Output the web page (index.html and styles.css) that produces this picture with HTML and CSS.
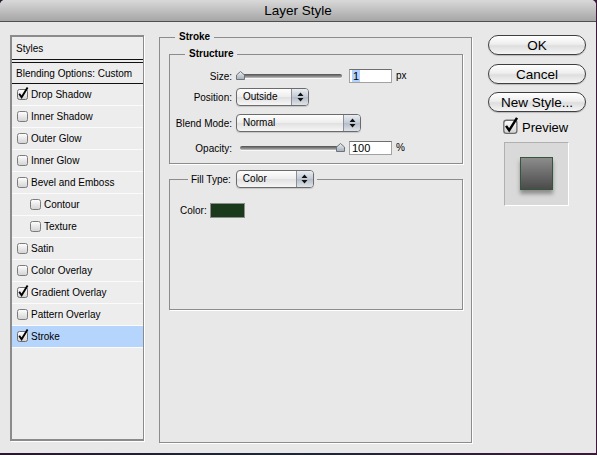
FILE: index.html
```html
<!DOCTYPE html>
<html lang="en">
<head>
  <meta charset="UTF-8" />
  <title>Layer Style</title>
  <link rel="stylesheet" href="styles.css">
</head>
<body>
  <!-- shared checkbox and arrow glyphs -->
  <svg class="defs" width="0" height="0">
    <defs>
      <linearGradient id="box-fill" x1="0" y1="0" x2="0" y2="1">
        <stop offset="0" stop-color="#ffffff"/>
        <stop offset="1" stop-color="#d2d2d2"/>
      </linearGradient>
      <linearGradient id="knob-fill" x1="0" y1="0" x2="0" y2="1">
        <stop offset="0" stop-color="#eef1f5"/>
        <stop offset="1" stop-color="#a4acb6"/>
      </linearGradient>
    </defs>
    <symbol id="cb-off" viewBox="0 0 12 13">
      <rect x="0.5" y="2.5" width="10" height="10" rx="2" fill="url(#box-fill)" stroke="#7c7c7c"/>
    </symbol>
    <symbol id="cb-on" viewBox="0 0 12 13">
      <rect x="0.5" y="2.5" width="10" height="10" rx="2" fill="url(#box-fill)" stroke="#6c6c6c"/>
      <path d="M2.2 6.8 L4.6 10.2 L10.6 0.6" fill="none" stroke="#000" stroke-width="1.9"/>
    </symbol>
    <symbol id="updown" viewBox="0 0 7 10">
      <path d="M3.5 0.5 L6.5 4 H0.5 Z M3.5 9.5 L6.5 6 H0.5 Z" fill="#111"/>
    </symbol>
    <symbol id="knob" viewBox="0 0 9 9">
      <path d="M0.5 8.5 V4 L4.5 0.5 L8.5 4 V8.5 Z" fill="url(#knob-fill)" stroke="#6e747c"/>
    </symbol>
  </svg>

  <div class="window">
    <div class="titlebar">Layer Style</div>

    <div class="content">
      <!-- effects list -->
      <ul class="styles-list">
        <li class="heading">Styles</li>
        <li class="blending">Blending Options: Custom</li>
        <li><svg class="cb"><use href="#cb-on"/></svg>Drop Shadow</li>
        <li><svg class="cb"><use href="#cb-off"/></svg>Inner Shadow</li>
        <li><svg class="cb"><use href="#cb-off"/></svg>Outer Glow</li>
        <li><svg class="cb"><use href="#cb-off"/></svg>Inner Glow</li>
        <li><svg class="cb"><use href="#cb-off"/></svg>Bevel and Emboss</li>
        <li class="sub"><svg class="cb"><use href="#cb-off"/></svg>Contour</li>
        <li class="sub"><svg class="cb"><use href="#cb-off"/></svg>Texture</li>
        <li><svg class="cb"><use href="#cb-off"/></svg>Satin</li>
        <li><svg class="cb"><use href="#cb-off"/></svg>Color Overlay</li>
        <li><svg class="cb"><use href="#cb-on"/></svg>Gradient Overlay</li>
        <li><svg class="cb"><use href="#cb-off"/></svg>Pattern Overlay</li>
        <li class="active"><svg class="cb"><use href="#cb-on"/></svg>Stroke</li>
      </ul>

      <!-- stroke settings -->
      <fieldset class="group stroke-group">
        <legend class="stroke-legend">Stroke</legend>

        <fieldset class="group structure">
          <legend class="structure-legend">Structure</legend>

          <div class="row row-size">
            <label class="label">Size:</label>
            <div class="slider">
              <div class="track"></div>
              <svg class="knob knob-start"><use href="#knob"/></svg>
            </div>
            <div class="field"><span class="selected">1</span></div>
            <span class="unit">px</span>
          </div>

          <div class="row row-position">
            <label class="label">Position:</label>
            <div class="select select-position">
              <span class="value">Outside</span>
              <span class="arrows"><svg><use href="#updown"/></svg></span>
            </div>
          </div>

          <div class="row row-blend">
            <label class="label">Blend Mode:</label>
            <div class="select select-blend">
              <span class="value">Normal</span>
              <span class="arrows"><svg><use href="#updown"/></svg></span>
            </div>
          </div>

          <div class="row row-opacity">
            <label class="label">Opacity:</label>
            <div class="slider">
              <div class="track"></div>
              <svg class="knob knob-end"><use href="#knob"/></svg>
            </div>
            <div class="field">100</div>
            <span class="unit">%</span>
          </div>
        </fieldset>

        <fieldset class="group fill">
          <legend class="fill-legend">
            <span class="fill-label">Fill Type:</span>
            <span class="select select-fill">
              <span class="value">Color</span>
              <span class="arrows"><svg><use href="#updown"/></svg></span>
            </span>
          </legend>

          <div class="color-row">
            <span>Color:</span>
            <span class="swatch"></span>
          </div>
        </fieldset>
      </fieldset>

      <!-- dialog buttons and preview -->
      <div class="side">
        <button class="btn btn-ok">OK</button>
        <button class="btn btn-cancel">Cancel</button>
        <button class="btn btn-new">New Style...</button>
        <div class="preview-toggle">
          <svg class="cb-big"><use href="#cb-on"/></svg>
          <span>Preview</span>
        </div>
        <div class="preview-box">
          <div class="preview-swatch"></div>
        </div>
      </div>
    </div>
  </div>
</body>
</html>
```

FILE: styles.css
```css
/* Reset & base */
* {
  box-sizing: border-box;
  margin: 0;
  padding: 0;
}

html,
body {
  width: 597px;
  height: 455px;
  overflow: hidden;
}

body {
  background: linear-gradient(90deg, #2a1730, #1c2838 45%, #3b1939);
  font-family: 'Liberation Sans', Arial, sans-serif;
  font-size: 10px;
  color: #000;
}

.defs {
  display: block;
  width: 0;
  height: 0;
  overflow: hidden;
}

/* Window frame */
.window {
  width: 596px;
  height: 453px;
  background: #e8e8e8;
  border-radius: 5px 5px 0 0;
  display: flex;
  flex-direction: column;
}

.titlebar {
  height: 22px;
  border-bottom: 1px solid #4f4f4f;
  border-radius: 5px 5px 0 0;
  background: linear-gradient(#d9d9d9, #a6a6a6);
  text-align: center;
  font-size: 13.5px;
  line-height: 21px;
}

.content {
  display: flex;
  align-items: flex-start;
  padding: 8px 0 0 10px;
}

/* Effects list */
.styles-list {
  list-style: none;
  width: 134px;
  height: 406px;
  margin-top: 5px;
  background: #ededed;
  border: 2px solid #8b8b8b;
  border-right-width: 1px;
  box-shadow: 1px 1px 0 #fff;
}

.styles-list li {
  display: flex;
  align-items: center;
  height: 22px;
  padding-left: 5px;
  border-bottom: 1px solid #fbfbfb;
}

.styles-list .heading {
  height: 26px;
  padding-left: 4px;
  border-bottom: 4px double #111;
}

.styles-list .blending {
  height: 21px;
  padding-left: 4px;
  border-bottom: 1px solid #111;
}

.styles-list .sub {
  padding-left: 18px;
}

.styles-list .active {
  background: #b5d5fd;
}

.cb {
  width: 12px;
  height: 13px;
  margin-right: 2px;
  margin-top: -2px;
}

/* Group boxes */
.group {
  border: 1px solid #8c8c8c;
  box-shadow: 1px 1px 0 #fff;
}

.stroke-group {
  width: 313px;
  height: 413px;
  margin-left: 15px;
  padding: 0 8px 0 9px;
}

.stroke-legend {
  font-weight: bold;
  line-height: 14px;
  margin-left: 6px;
  padding: 0 4px;
}

.structure {
  margin-top: 3px;
  padding: 0 0 8px;
}

.structure-legend {
  font-weight: bold;
  line-height: 14px;
  margin-left: 15px;
  padding: 0 4px;
}

.row {
  display: flex;
  align-items: center;
}

.row-size {
  height: 14px;
  margin-top: 8px;
}

.row-position {
  height: 18px;
  margin-top: 5px;
}

.row-blend {
  height: 18px;
  margin-top: 8px;
}

.row-opacity {
  height: 14px;
  margin-top: 9px;
}

.label {
  width: 62px;
  text-align: right;
  margin-right: 4px;
}

/* Sliders */
.slider {
  position: relative;
  width: 109px;
  height: 14px;
  margin-right: 4px;
}

.track {
  margin: 5px 3px 0 4px;
  height: 4px;
  border-radius: 2px;
  background: linear-gradient(#4f4f4f, #8c8c8c 60%, #c4c4c4);
  box-shadow: 0 1px 0 rgba(255, 255, 255, 0.7);
}

.knob {
  position: absolute;
  top: 2px;
  width: 9px;
  height: 9px;
}

.knob-start {
  left: 0;
}

.knob-end {
  right: 0;
}

/* Text fields */
.field {
  width: 43px;
  height: 14px;
  background: #fff;
  border: 1px solid #a2a2a2;
  border-top-color: #6e6e6e;
  font-size: 11px;
  line-height: 12px;
  padding-left: 2px;
}

.selected {
  background: #b3d3fd;
  padding: 0 1px;
}

.unit {
  margin-left: 4px;
  margin-top: -2px;
}

/* Pop-up menus */
.select {
  display: flex;
  height: 18px;
  border: 1px solid #6b6b6b;
  border-radius: 4px;
  overflow: hidden;
  background: linear-gradient(#fefefe, #ededed 50%, #e0e0e0 51%, #f6f6f6);
  box-shadow: 0 1px 1px rgba(0, 0, 0, 0.15);
}

.select .value {
  flex: 1;
  padding-left: 6px;
  line-height: 16px;
}

.select .arrows {
  width: 17px;
  display: flex;
  align-items: center;
  justify-content: center;
  border-left: 1px solid #8a8f98;
  background: linear-gradient(#e9edf3, #c3cad4 50%, #b4bcc8 51%, #dfe4ea);
}

.select .arrows svg {
  width: 7px;
  height: 10px;
}

.select-position {
  width: 73px;
}

.select-blend {
  width: 125px;
}

/* Fill type */
.fill {
  height: 140px;
  margin-top: 6px;
  padding-left: 10px;
}

.fill-legend {
  display: flex;
  align-items: center;
  margin-left: 8px;
  padding: 0 3px;
  height: 18px;
}

.fill-label {
  margin-right: 5px;
}

.select-fill {
  width: 78px;
}

.color-row {
  display: flex;
  align-items: center;
  height: 15px;
  margin-top: 15px;
}

.swatch {
  width: 35px;
  height: 15px;
  margin-left: 3px;
  background: #1b3a1b;
  border: 1px solid #8c8c8c;
}

/* Right column */
.side {
  width: 98px;
  margin: 5px 0 0 16px;
  display: flex;
  flex-direction: column;
}

.btn {
  height: 20px;
  width: 98px;
  border: 1px solid #3f3f3f;
  border-radius: 10px;
  background: linear-gradient(#ffffff, #eeeeee 45%, #dedede 55%, #f5f5f5);
  box-shadow: 0 1px 1px rgba(0, 0, 0, 0.2);
  font-family: 'Liberation Sans', Arial, sans-serif;
  font-size: 13.5px;
  line-height: 17px;
  color: #000;
}

.btn-cancel {
  margin-top: 9px;
}

.btn-new {
  margin-top: 8px;
}

.preview-toggle {
  display: flex;
  align-items: center;
  height: 16px;
  margin-top: 7px;
  padding-left: 15px;
  font-size: 13px;
}

.cb-big {
  width: 16px;
  height: 17px;
  margin-right: 3px;
  margin-top: -3px;
}

.preview-box {
  width: 65px;
  height: 64px;
  margin: 7px 0 0 16px;
  background: #d9d9d9;
  border: 1px solid #fff;
  border-top-color: #b0b0b0;
  border-left-color: #b0b0b0;
  display: flex;
  align-items: center;
  justify-content: center;
}

.preview-swatch {
  width: 33px;
  height: 33px;
  margin-top: -1px;
  border: 1px solid #35563a;
  background: linear-gradient(#8c8c8c, #4b4b4b);
  box-shadow: 0 4px 4px rgba(0, 0, 0, 0.35);
}
```
